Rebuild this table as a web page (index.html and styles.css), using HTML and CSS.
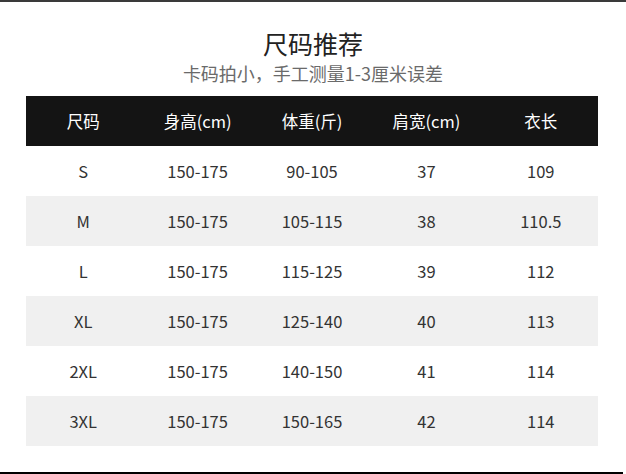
FILE: index.html
```html
<!DOCTYPE html>
<html lang="zh">
<head>
<meta charset="utf-8">
<title>尺码推荐</title>
<link rel="stylesheet" href="styles.css">
</head>
<body>
<div class="page">
  <div class="top-line"></div>
  <h1 class="title">尺码推荐</h1>
  <p class="subtitle">卡码拍小，手工测量1-3厘米误差</p>
  <div class="table">
    <div class="row head">
      <div>尺码</div><div>身高(cm)</div><div>体重(斤)</div><div>肩宽(cm)</div><div>衣长</div>
    </div>
    <div class="row">
      <div>S</div><div>150-175</div><div>90-105</div><div>37</div><div>109</div>
    </div>
    <div class="row alt">
      <div>M</div><div>150-175</div><div>105-115</div><div>38</div><div>110.5</div>
    </div>
    <div class="row">
      <div>L</div><div>150-175</div><div>115-125</div><div>39</div><div>112</div>
    </div>
    <div class="row alt">
      <div>XL</div><div>150-175</div><div>125-140</div><div>40</div><div>113</div>
    </div>
    <div class="row">
      <div>2XL</div><div>150-175</div><div>140-150</div><div>41</div><div>114</div>
    </div>
    <div class="row alt">
      <div>3XL</div><div>150-175</div><div>150-165</div><div>42</div><div>114</div>
    </div>
  </div>
  <div class="bottom-line"></div>
</div>
</body>
</html>
```
FILE: styles.css
```css
html, body {
  margin: 0;
  padding: 0;
  background: #ffffff;
}
body {
  font-family: "Noto Sans CJK SC", "Noto Sans", sans-serif;
  font-weight: 400;
  color: #333333;
}
.page {
  width: 626px;
  height: 474px;
  overflow: hidden;
  display: flex;
  flex-direction: column;
}
.top-line {
  height: 2px;
  background: #3a3a3a;
}
.title {
  margin: 26px 0 0;
  font-size: 25px;
  line-height: 30px;
  font-weight: 400;
  color: #222222;
  text-align: center;
}
.subtitle {
  margin: 2px 0 0;
  font-size: 18px;
  line-height: 26px;
  color: #6a6a6a;
  text-align: center;
}
.table {
  margin: 10px 28px 0 26px;
  display: flex;
  flex-direction: column;
}
.row {
  display: grid;
  grid-template-columns: repeat(5, 1fr);
  height: 50px;
  align-items: center;
  font-size: 16.5px;
  color: #333333;
  background: #ffffff;
}
.row > div {
  text-align: center;
}
.row.head {
  background: #141414;
  color: #ffffff;
}
.row.alt {
  background: #f0f0f0;
}
.bottom-line {
  margin-top: auto;
  height: 2px;
  width: 623px;
  background: #000000;
}
```
